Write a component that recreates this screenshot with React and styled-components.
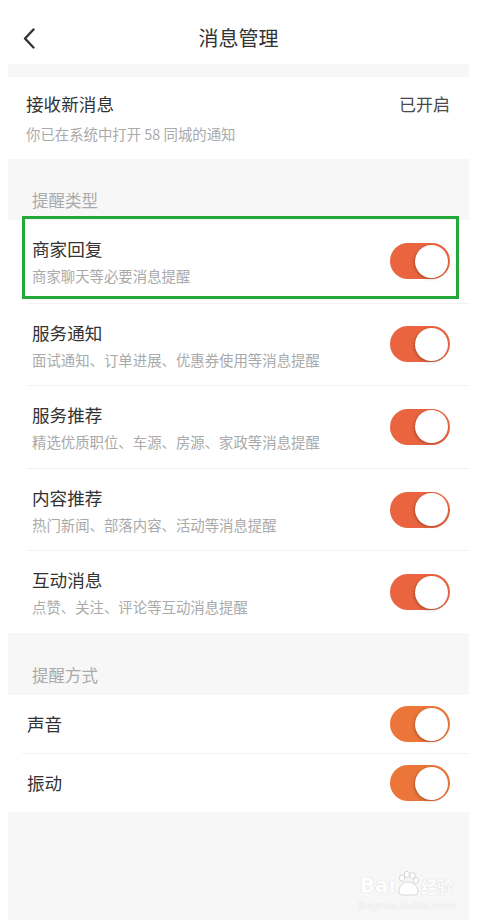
import React from "react";
import styled, { createGlobalStyle } from "styled-components";

const Global = createGlobalStyle`
  html, body { margin: 0; padding: 0; background: #fff; }
  body { font-family: "Noto Sans CJK SC", "Noto Sans", sans-serif; }
  * { box-sizing: border-box; }
`;

const Page = styled.div`
  width: 461px;
  margin-left: 8px;
  min-height: 920px;
  display: flex;
  flex-direction: column;
  background: #fff;
`;

const Header = styled.header`
  height: 64px;
  padding-top: 12px;
  display: grid;
  grid-template-columns: 60px 1fr 60px;
  align-items: center;
  background: #fff;
`;

const BackButton = styled.div`
  padding-left: 15px;
  display: flex;
  align-items: center;
  color: #333;
`;

const Title = styled.h1`
  margin: 0;
  text-align: center;
  font-size: 20px;
  font-weight: 400;
  color: #333;
  line-height: 28px;
`;

const Gap = styled.div`
  height: ${(p) => p.h}px;
  background: #f7f7f7;
`;

const Section = styled.section`
  background: #fff;
`;

const ReceiveRow = styled.div`
  height: 82px;
  padding: 16px 19px 0 18px;
  display: flex;
  justify-content: space-between;
  align-items: flex-start;
`;

const TextCol = styled.div`
  display: flex;
  flex-direction: column;
`;

const RowTitle = styled.div`
  font-size: 17.6px;
  line-height: 22px;
  color: #333;
`;

const RowSub = styled.div`
  margin-top: ${(p) => p.mt ?? 6}px;
  font-size: 14.4px;
  line-height: 20px;
  color: #aaa;
  white-space: nowrap;
`;

const Status = styled.div`
  font-size: 17px;
  line-height: 22px;
  color: #4a4a4a;
`;

const SectionLabel = styled.div`
  height: ${(p) => p.h}px;
  padding: ${(p) => p.pt}px 0 0 24px;
  background: #f7f7f7;
  font-size: 16.5px;
  line-height: 22px;
  color: #aaa;
`;

const ToggleRow = styled.div`
  position: relative;
  height: ${(p) => p.h}px;
  margin-left: ${(p) => p.indent - 5}px;
  padding: ${(p) => (p.sub ? "18px" : "0")} 19px 0 5px;
  display: flex;
  justify-content: space-between;
  align-items: ${(p) => (p.sub ? "flex-start" : "center")};
  border-top: ${(p) => (p.first ? "none" : "1px solid #f2f2f2")};
`;

const ToggleWrap = styled.div`
  align-self: center;
  margin-top: ${(p) => (p.sub ? "-18px" : "0")};
`;

const Switch = styled.div`
  position: relative;
  width: 60px;
  height: 36px;
  border-radius: 18px;
  background: ${(p) => p.color};
`;

const Knob = styled.div`
  position: absolute;
  right: 2px;
  top: 1.5px;
  width: 33px;
  height: 33px;
  border-radius: 50%;
  background: #fff;
  box-shadow: -1px 1px 3px rgba(0, 0, 0, 0.25);
`;

const Highlight = styled.div`
  position: absolute;
  left: -5px;
  right: 10px;
  top: -4px;
  bottom: 4px;
  border: 3px solid #22a93a;
  pointer-events: none;
`;

const Footer = styled.div`
  position: relative;
  flex: 1;
  background: #f7f7f7;
`;

const Watermark = styled.div`
  position: absolute;
  right: 14px;
  bottom: 8px;
  display: flex;
  flex-direction: column;
  align-items: center;
  color: #fff;
  text-shadow: 0 0 1px rgba(0, 0, 0, 0.22);
  font-family: "DejaVu Sans", sans-serif;
`;

const MarkTop = styled.div`
  display: flex;
  align-items: flex-end;
  font-size: 20px;
  font-weight: 700;
  line-height: 22px;
`;

const MarkCn = styled.span`
  font-family: "Noto Sans CJK SC", sans-serif;
  font-size: 16px;
  font-weight: 700;
  line-height: 20px;
`;

const MarkUrl = styled.div`
  font-size: 10.5px;
  line-height: 14px;
  margin-top: 2px;
`;

function Toggle({ color }) {
  return (
    <Switch color={color}>
      <Knob />
    </Switch>
  );
}

const types = [
  ["商家回复", "商家聊天等必要消息提醒"],
  ["服务通知", "面试通知、订单进展、优惠券使用等消息提醒"],
  ["服务推荐", "精选优质职位、车源、房源、家政等消息提醒"],
  ["内容推荐", "热门新闻、部落内容、活动等消息提醒"],
  ["互动消息", "点赞、关注、评论等互动消息提醒"],
];

export default function App() {
  return (
    <>
      <Global />
      <Page>
        <Header>
          <BackButton>
            <svg width="13" height="21" viewBox="0 0 13 21">
              <polyline
                points="10.5,1.5 2,10.5 10.5,19.5"
                fill="none"
                stroke="#333"
                strokeWidth="2.4"
                strokeLinecap="round"
                strokeLinejoin="round"
              />
            </svg>
          </BackButton>
          <Title>消息管理</Title>
          <div />
        </Header>
        <Gap h={13} />
        <Section>
          <ReceiveRow>
            <TextCol>
              <RowTitle>接收新消息</RowTitle>
              <RowSub mt={9}>你已在系统中打开 58 同城的通知</RowSub>
            </TextCol>
            <Status>已开启</Status>
          </ReceiveRow>
        </Section>
        <SectionLabel h={61} pt={30}>提醒类型</SectionLabel>
        <Section>
          {types.map(([t, s], i) => (
            <ToggleRow key={t} h={82.6} indent={24} sub first={i === 0}>
              <TextCol>
                <RowTitle>{t}</RowTitle>
                <RowSub>{s}</RowSub>
              </TextCol>
              <ToggleWrap sub>
                <Toggle color="#e9643f" />
              </ToggleWrap>
              {i === 0 && <Highlight />}
            </ToggleRow>
          ))}
        </Section>
        <SectionLabel h={62} pt={31}>提醒方式</SectionLabel>
        <Section>
          <ToggleRow h={58.5} indent={19} first>
            <RowTitle>声音</RowTitle>
            <Toggle color="#ec763a" />
          </ToggleRow>
          <ToggleRow h={58.5} indent={19}>
            <RowTitle>振动</RowTitle>
            <Toggle color="#ec763a" />
          </ToggleRow>
        </Section>
        <Footer>
          <Watermark>
            <MarkTop>
              Bai
              <svg width="26" height="26" viewBox="0 0 26 26">
                <g fill="#fff" stroke="rgba(0,0,0,0.18)" strokeWidth="0.8">
                  <ellipse cx="7" cy="8" rx="2.6" ry="3.2" />
                  <ellipse cx="12" cy="4.5" rx="2.6" ry="3.2" />
                  <ellipse cx="17.5" cy="5.5" rx="2.6" ry="3.2" />
                  <ellipse cx="21" cy="10.5" rx="2.4" ry="3" />
                  <path d="M4 22 C4 15 9 12 13 12 C18 12 23 16 23 22 C23 25 20 25 13 25 C6 25 4 25 4 22 Z" />
                </g>
              </svg>
              <MarkCn>经验</MarkCn>
            </MarkTop>
            <MarkUrl>jingyan.baidu.com</MarkUrl>
          </Watermark>
        </Footer>
      </Page>
    </>
  );
}
